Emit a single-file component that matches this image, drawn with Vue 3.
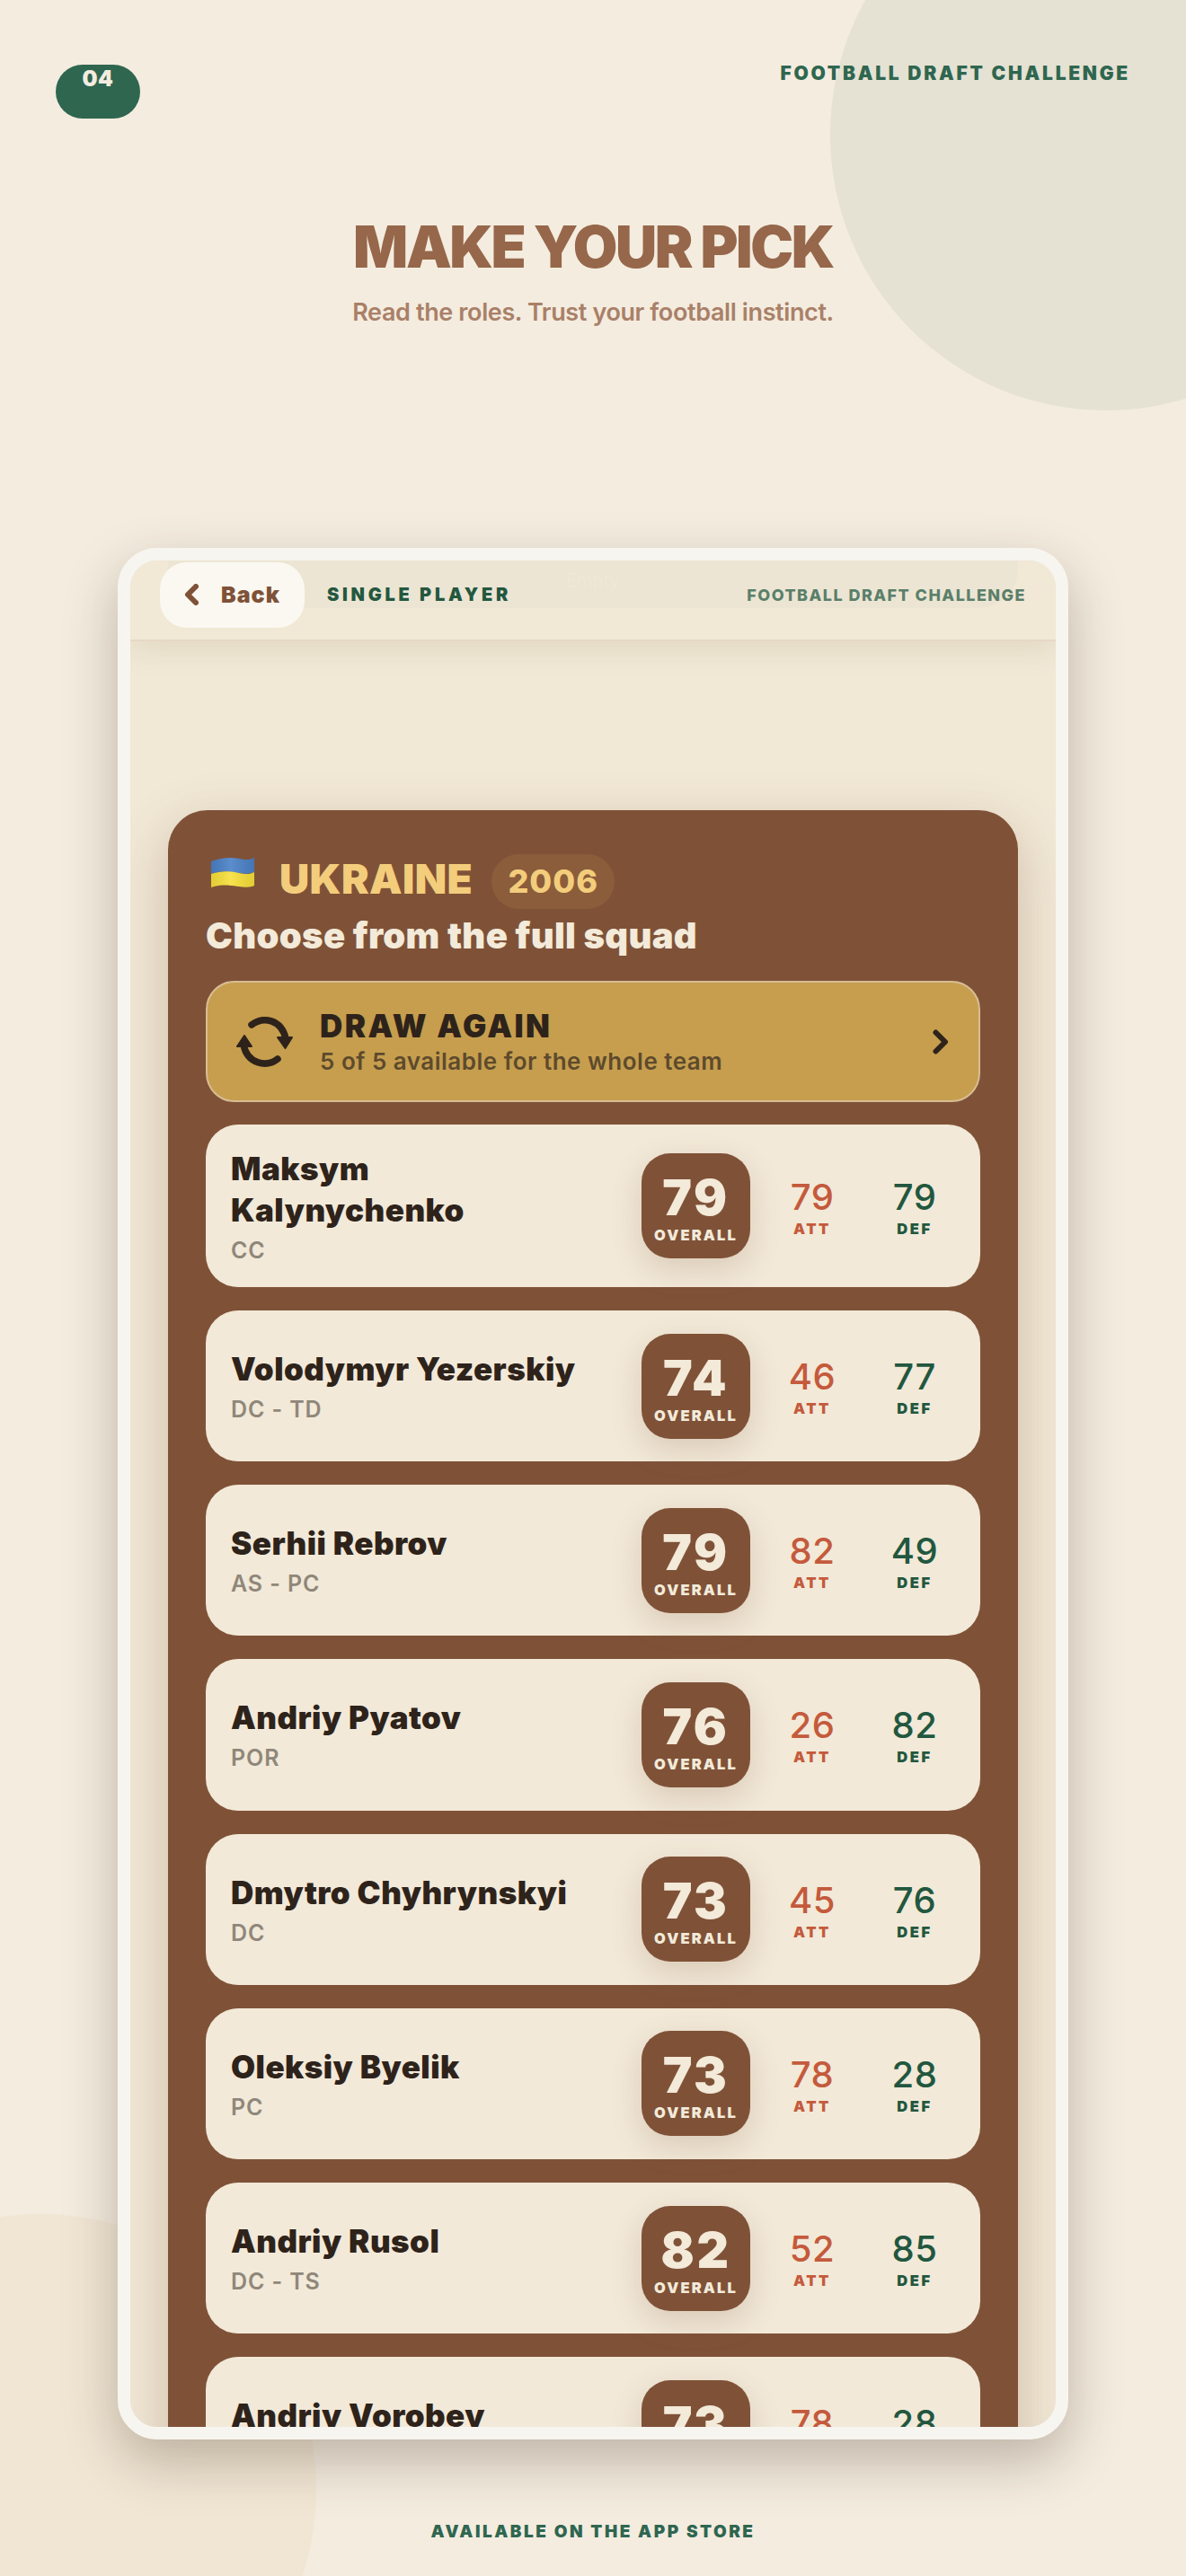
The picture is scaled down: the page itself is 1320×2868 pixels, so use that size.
<template>
  <div class="page">
    <div class="blob blob-top"></div>
    <div class="blob blob-bottom"></div>

    <div class="topbar">
      <div class="badge">04</div>
      <div class="brand">FOOTBALL DRAFT CHALLENGE</div>
    </div>

    <div class="hero">
      <h1>MAKE YOUR PICK</h1>
      <p>Read the roles. Trust your football instinct.</p>
    </div>

    <div class="frame">
      <div class="screen">
        <div class="nav">
          <div class="ghost-band">Empty</div>
          <button class="back">
            <svg width="16" height="24" viewBox="0 0 16 24" fill="none">
              <path d="M13 3 L4 12 L13 21" stroke="#7f5238" stroke-width="6" stroke-linecap="round" stroke-linejoin="round" />
            </svg>
            <span>Back</span>
          </button>
          <span class="mode">SINGLE PLAYER</span>
          <span class="nav-brand">FOOTBALL DRAFT CHALLENGE</span>
        </div>

        <div class="squad">
          <div class="squad-title">
            <svg class="flag" width="48" height="34" viewBox="0 0 48 34">
              <defs>
                <linearGradient id="shade" x1="0" y1="0" x2="1" y2="0">
                  <stop offset="0" stop-color="#000" stop-opacity=".08" />
                  <stop offset=".45" stop-color="#fff" stop-opacity=".1" />
                  <stop offset="1" stop-color="#000" stop-opacity=".08" />
                </linearGradient>
              </defs>
              <path d="M0 5 C12 1 22 0 31 2 S44 3 48 1 V17 C44 19 38 19 31 18 S12 15 0 19 Z" fill="#4a80c6" />
              <path d="M0 19 C12 15 22 16 31 18 S44 19 48 17 V32 C44 34 38 34 31 33 S12 30 0 34 Z" fill="#f7df3a" />
              <path d="M0 5 C12 1 22 0 31 2 S44 3 48 1 V32 C44 34 38 34 31 33 S12 30 0 34 Z" fill="url(#shade)" />
            </svg>
            <span class="country">UKRAINE</span>
            <span class="year">2006</span>
          </div>
          <div class="squad-sub">Choose from the full squad</div>

          <button class="draw">
            <svg class="sync" width="63" height="56" viewBox="0 0 63 56" fill="none">
              <path d="M17 9 C30 -1 50 3 55 24" stroke="#2e231b" stroke-width="7.5" stroke-linecap="round" />
              <path d="M46 23 H62 L54.5 35 Z" fill="#2e231b" stroke="#2e231b" stroke-width="2" stroke-linejoin="round" />
              <path d="M46 47 C33 57 12 52 8 31" stroke="#2e231b" stroke-width="7.5" stroke-linecap="round" />
              <path d="M1 33 H17 L9 21 Z" fill="#2e231b" stroke="#2e231b" stroke-width="2" stroke-linejoin="round" />
            </svg>
            <span class="draw-text">
              <span class="draw-title">DRAW AGAIN</span>
              <span class="draw-sub">5 of 5 available for the whole team</span>
            </span>
            <svg class="draw-arrow" width="18" height="28" viewBox="0 0 18 28" fill="none">
              <path d="M3.5 3.5 L14 14 L3.5 24.5" stroke="#2e231b" stroke-width="6" stroke-linecap="round" stroke-linejoin="round" />
            </svg>
          </button>

          <div class="rows">
            <div v-for="p in players" :key="p.name" class="row">
              <div class="who">
                <div class="name">{{ p.name }}</div>
                <div class="role">{{ p.role }}</div>
              </div>
              <div class="overall">
                <span class="overall-num">{{ p.ovr }}</span>
                <span class="overall-label">OVERALL</span>
              </div>
              <div class="stat att">
                <span class="stat-num">{{ p.att }}</span>
                <span class="stat-label">ATT</span>
              </div>
              <div class="stat def">
                <span class="stat-num">{{ p.def }}</span>
                <span class="stat-label">DEF</span>
              </div>
            </div>
          </div>
        </div>
      </div>
    </div>

    <div class="foot">AVAILABLE ON THE APP STORE</div>
  </div>
</template>

<script setup>
const players = [
  { name: 'Maksym Kalynychenko', role: 'CC', ovr: 79, att: 79, def: 79 },
  { name: 'Volodymyr Yezerskiy', role: 'DC - TD', ovr: 74, att: 46, def: 77 },
  { name: 'Serhii Rebrov', role: 'AS - PC', ovr: 79, att: 82, def: 49 },
  { name: 'Andriy Pyatov', role: 'POR', ovr: 76, att: 26, def: 82 },
  { name: 'Dmytro Chyhrynskyi', role: 'DC', ovr: 73, att: 45, def: 76 },
  { name: 'Oleksiy Byelik', role: 'PC', ovr: 73, att: 78, def: 28 },
  { name: 'Andriy Rusol', role: 'DC - TS', ovr: 82, att: 52, def: 85 },
  { name: 'Andriy Vorobey', role: 'AS', ovr: 73, att: 78, def: 28 }
]
</script>

<style scoped>
.page {
  position: relative;
  width: 1320px;
  height: 2868px;
  overflow: hidden;
  background: #f4ecdf;
  font-family: Inter, "Noto Sans", sans-serif;
  padding-top: 72px;
  box-sizing: border-box;
}
.blob { position: absolute; border-radius: 50%; width: 614px; height: 614px }
.blob-top { left: 924px; top: -157px; background: #e5e2d3 }
.blob-bottom { left: -262px; top: 2465px; background: #f1e6d4 }

.topbar { position: relative; display: flex; justify-content: space-between; padding: 0 62px 0 62px; height: 60px }
.badge {
  width: 94px; height: 60px; border-radius: 30px; background: #2f6650; color: #f4ecdf;
  font-size: 24px; font-weight: 900; text-align: center; line-height: 32px;
  letter-spacing: .5px;
}
.brand { color: #2f6650; font-size: 21px; font-weight: 900; letter-spacing: 2.75px; line-height: 24px; margin-top: -2px }

.hero { position: relative; text-align: center; margin-top: 107px }
.hero h1 { margin: 0; font-size: 64px; font-weight: 900; line-height: 72px; letter-spacing: -2.4px; color: #96674a }
.hero p { margin: 19px 0 0; font-size: 27px; font-weight: 600; line-height: 36px; color: #a98068; letter-spacing: -.38px }

.frame {
  position: relative;
  width: 1058px;
  height: 2106px;
  margin: 244px auto 0;
  box-sizing: border-box;
  border: 14px solid #f7f5f0;
  border-radius: 44px;
  box-shadow: 0 24px 60px rgba(50, 35, 20, .28);
}
.screen {
  height: 100%;
  border-radius: 30px;
  overflow: hidden;
  background: #f1e8d6;
  display: flex;
  flex-direction: column;
}

.nav {
  position: relative;
  z-index: 2;
  flex: none;
  display: flex;
  align-items: center;
  height: 90px;
  box-sizing: border-box;
  padding: 2px 33px 14px 33px;
  background: #f1e8d6;
  border-bottom: 2px solid #e7d8c6;
  box-shadow: 0 8px 34px rgba(110, 95, 40, .12);
}
.ghost-band {
  position: absolute; left: 42px; top: 0; width: 946px; height: 53px;
  border-radius: 0 0 44px 44px; background: #ece5d3; color: #efe8d8;
  text-align: center; font-size: 20px; line-height: 44px;
}
.back {
  position: relative; display: flex; align-items: center; gap: 25px; width: 161px; height: 73px;
  box-sizing: border-box; padding: 0 0 0 27px; border: 0; border-radius: 30px; background: #faf8f1;
  color: #7f5238; font-family: inherit; font-size: 25px; font-weight: 900; letter-spacing: 1px;
}
.mode { position: relative; margin-left: 25px; color: #23573f; font-size: 20px; font-weight: 900; letter-spacing: 3.7px }
.nav-brand { position: relative; margin-left: auto; color: #5a7f6a; font-size: 18px; font-weight: 800; letter-spacing: 1.45px }

.squad {
  flex: none;
  width: 946px;
  box-sizing: border-box;
  margin: 188px 0 0 42px;
  padding: 49px 42px 42px;
  background: #7f5238;
  border-radius: 44px;
  box-shadow: 0 20px 60px rgba(127, 82, 56, .3);
}
.squad-title { display: flex; align-items: center; height: 61px }
.flag { margin: 0 28px 0 6px; position: relative; top: -11px }
.country { color: #f3cd7c; font-size: 46px; font-weight: 900; line-height: 61px; position: relative; top: -3px; letter-spacing: .4px }
.year {
  margin-left: 21px; width: 137px; height: 61px; border-radius: 31px; background: #8b5d3b;
  color: #f3cd7c; font-size: 36px; font-weight: 800; line-height: 61px; text-align: center; letter-spacing: 1px;
}
.squad-sub { margin: 5px 0 25px; color: #f3ead9; font-size: 40px; font-weight: 900; line-height: 50px; letter-spacing: .3px }

.draw {
  display: flex; align-items: center; width: 862px; height: 135px; box-sizing: border-box;
  padding: 0 33px 0 32px; background: #c69e4e; border: 2px solid #d8bd93; border-radius: 32px;
  font-family: inherit; text-align: left;
}
.draw-text { display: flex; flex-direction: column; margin-left: 30px; flex: 1 }
.draw-title { color: #2e231b; font-size: 35px; font-weight: 900; letter-spacing: 2.4px; line-height: 44px }
.draw-sub { color: #5d4a2c; font-size: 26px; font-weight: 600; letter-spacing: .5px; line-height: 36px }

.rows { display: flex; flex-direction: column; gap: 26px; margin-top: 25px }
.row {
  display: flex; align-items: center; gap: 24px; min-height: 168.2px; box-sizing: border-box;
  padding: 25.5px 28px; background: #f2e9d8; border-radius: 36px;
}
.who { flex: 1; min-width: 0 }
.name { color: #2e231b; font-size: 35px; font-weight: 900; line-height: 46px; max-width: 410px; letter-spacing: .45px }
.role { color: #8f877a; font-size: 25px; font-weight: 600; line-height: 32px; padding-top: 6px; letter-spacing: .9px }

.overall {
  flex: none; width: 121px; height: 117px; box-sizing: border-box; padding-top: 2px; border-radius: 32px;
  background: #7f5238; color: #f3ead9;
  display: flex; flex-direction: column; align-items: center; justify-content: center;
  box-shadow: 0 12px 34px rgba(127, 82, 56, .2);
}
.overall-num { font-size: 55px; font-weight: 900; line-height: 64px; letter-spacing: 2.5px }
.overall-label { font-size: 16.5px; font-weight: 900; line-height: 21px; letter-spacing: 2.1px }

.stat { flex: none; width: 90px; box-sizing: border-box; padding-top: 3px; display: flex; flex-direction: column; align-items: center }
.stat-num { font-size: 40px; font-weight: 500; line-height: 48px; letter-spacing: .5px }
.stat-label { font-size: 16.5px; font-weight: 900; line-height: 23px; letter-spacing: 2.6px }
.att { color: #c45a3c }
.def { color: #22573f }

.foot {
  position: relative; margin-top: 91px; text-align: center; color: #2f6650;
  font-size: 19px; font-weight: 900; letter-spacing: 2.5px; line-height: 24px;
}
</style>
